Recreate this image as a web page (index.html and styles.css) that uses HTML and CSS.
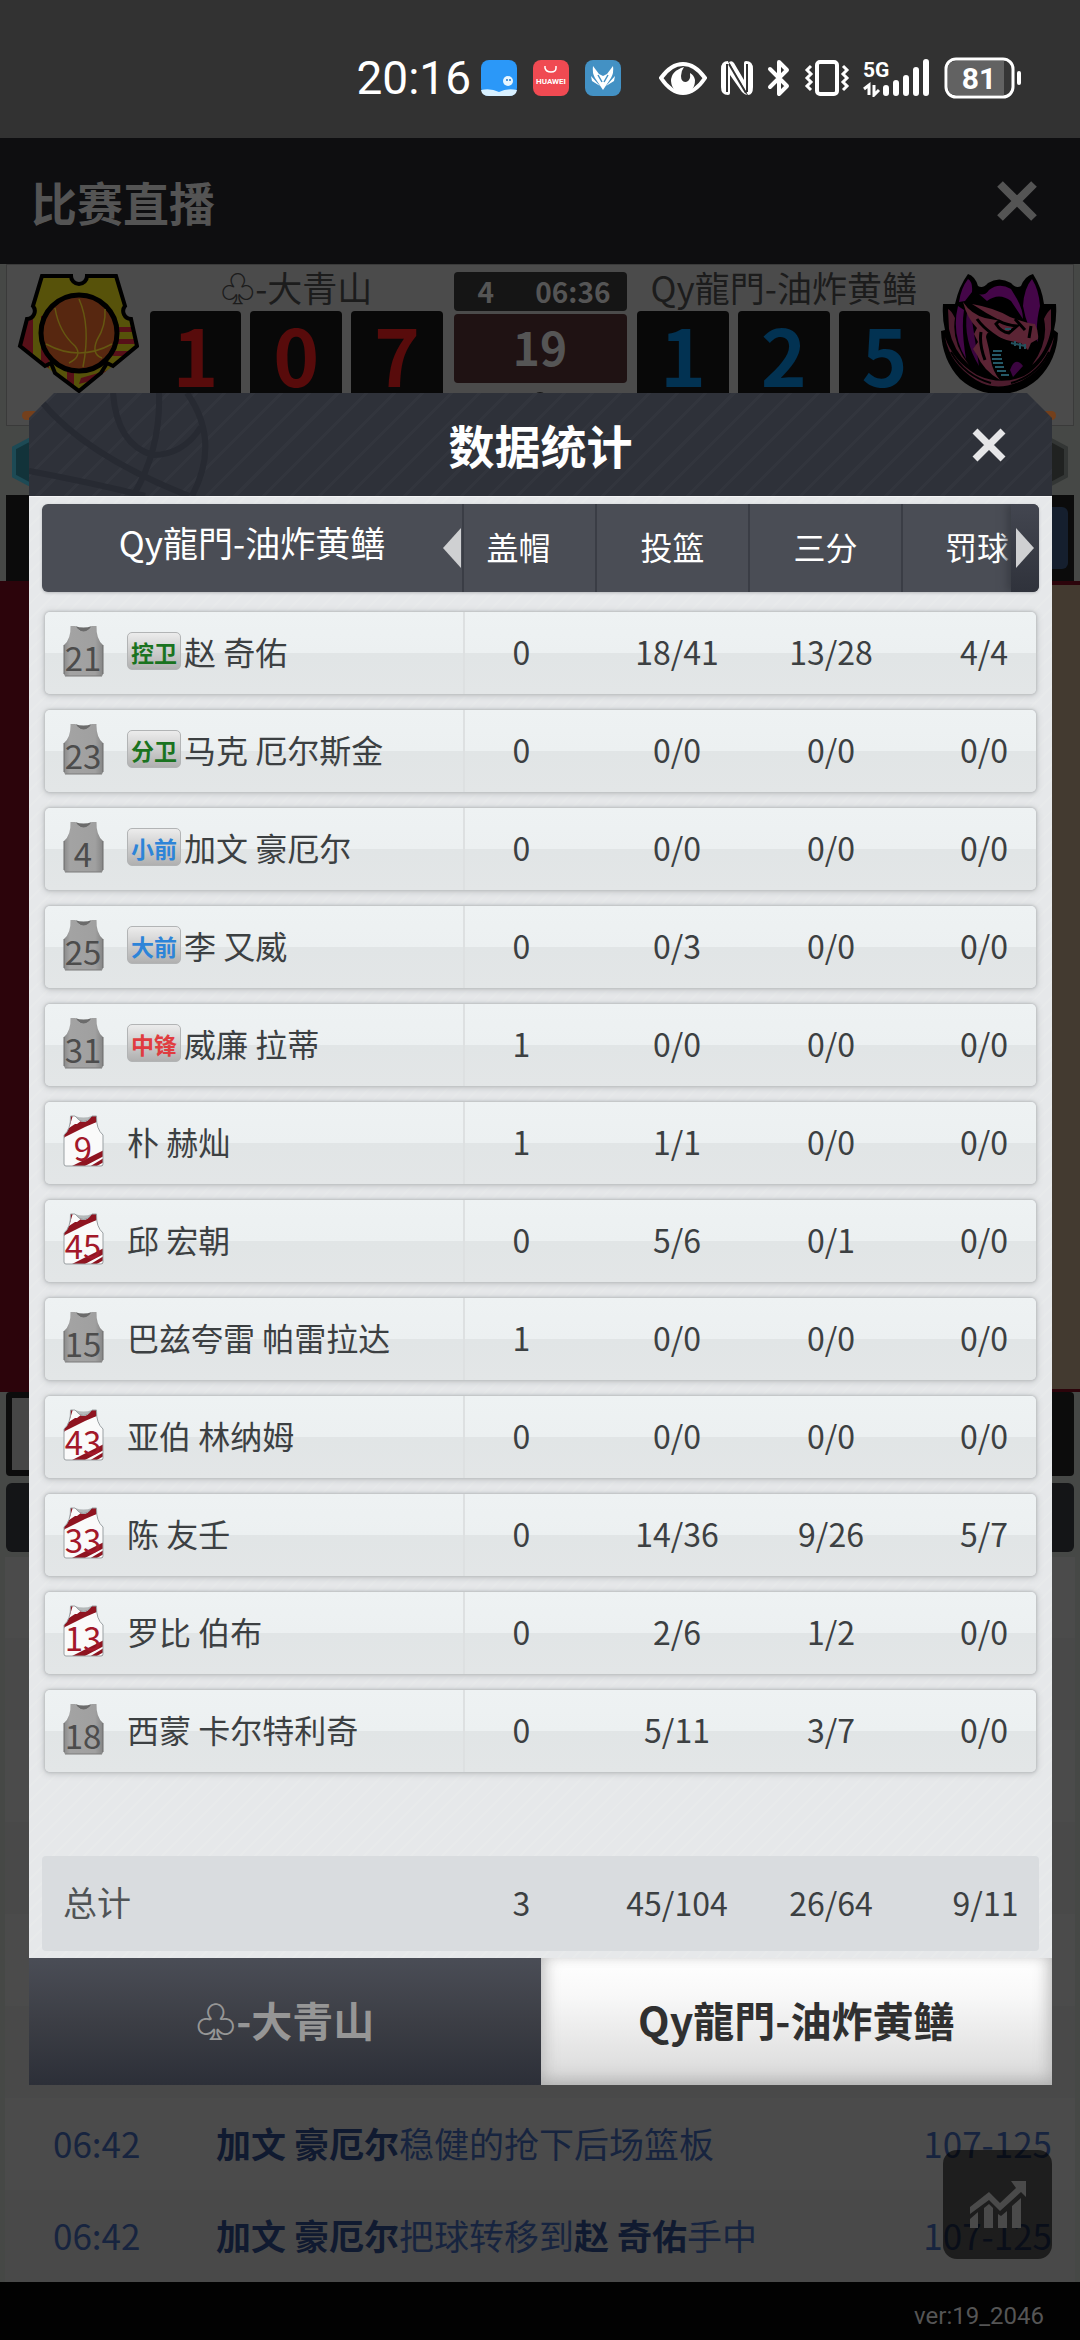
FILE: index.html
```html
<!doctype html>
<html lang="zh-CN">
    <head>
        <meta charset="UTF-8" />
        <meta name="viewport" content="width=device-width, initial-scale=1.0" />
        <title>比赛直播 - 数据统计</title>
        <link rel="stylesheet" href="styles.css">
    </head>
    <body>
        <!-- 共用图形 -->
        <svg class="defs" width="0" height="0" aria-hidden="true">
            <defs>
                <linearGradient id="greyFill" x1="0" y1="0" x2="1" y2="0">
                    <stop offset="0" stop-color="#8a8a8a" />
                    <stop offset="0.15" stop-color="#a3a3a3" />
                    <stop offset="0.8" stop-color="#a0a0a0" />
                    <stop offset="1" stop-color="#858585" />
                </linearGradient>
                <path id="shirt" d="M7.500 1H12Q20.500 12 29 1H33.500Q33 14 40 20V49Q40 51 38 51H3Q1 51 1 49V20Q8 14 7.500 1Z" />
                <clipPath id="shirtClip"><use href="#shirt" /></clipPath>
                <symbol id="jerseyGrey" viewBox="0 0 41 53">
                    <path d="M12 1Q20.500 4 29 1Q21 13 12 1Z" fill="#6b6b6b" />
                    <use href="#shirt" fill="url(#greyFill)" />
                    <path d="M1 20V49M40 20V49" stroke="#6a6a6a" stroke-width="1" />
                    <path d="M2 51H39" stroke="#7a7a7a" stroke-width="1" />
                </symbol>
                <symbol id="jerseyRed" viewBox="0 0 41 53">
                    <use href="#shirt" fill="#fafafa" />
                    <g clip-path="url(#shirtClip)" fill="#8f1420">
                        <path d="M0 24V17L12 9L24 9L36 2V6L22 12L2 22Z" />
                        <path d="M6 0H10L7 10ZM24 0H36V6L20 11L8 17L10 12L18 6Z" />
                        <path d="M7 52L41 35V41L20 52ZM26 52L41 43V47L32 52ZM37 52L41 49V52Z" />
                    </g>
                    <path d="M12 1Q20.500 4 29 1Q21 13 12 1Z" fill="#b5b9ba" />
                    <use href="#shirt" fill="none" stroke="#9aa0a3" stroke-width="1" />
                </symbol>
            </defs>
        </svg>

        <!-- 状态栏 -->
        <div class="status-bar">
            <span class="clock">20:16</span>
            <div class="app-icons">
                <svg width="36" height="36" viewBox="0 0 36 36">
                    <rect width="36" height="36" rx="8" fill="#2b98f8" />
                    <path d="M0 30Q10 28 18 32Q26 28 36 30Q35 36 28 36H8Q1 36 0 30Z" fill="#d9f0ff" />
                    <circle cx="27" cy="21" r="5" fill="#e8f6ff" />
                    <circle cx="26" cy="20" r="1" fill="#2477c8" />
                    <circle cx="29" cy="20" r="1" fill="#2477c8" />
                </svg>
                <svg width="36" height="36" viewBox="0 0 36 36">
                    <rect width="36" height="36" rx="8" fill="#f04a52" />
                    <path d="M12 6V8Q13 12 18 12Q23 12 23 8V6" fill="none" stroke="#fff" stroke-width="1.500" />
                    <text x="18" y="24" class="huawei">HUAWEI</text>
                </svg>
                <svg width="36" height="36" viewBox="0 0 36 36">
                    <rect width="36" height="36" rx="8" fill="#4391c4" />
                    <path d="M8 6L14 14L18 16L22 14L28 6Q29 13 26 18L18 30L10 18Q7 13 8 6Z" fill="#fff" />
                    <path d="M6 16L15 26L7 21ZM30 16L21 26L29 21Z" fill="#fff" />
                    <path d="M13 15L17 22M23 15L19 22" stroke="#4391c4" stroke-width="1.500" />
                </svg>
            </div>
            <div class="system-icons">
                <svg width="48" height="36" viewBox="0 0 48 36">
                    <path d="M2 18Q12 4 24 4Q36 4 46 18Q36 33 24 33Q12 33 2 18Z" fill="none" stroke="#fff" stroke-width="4" />
                    <path d="M25 7Q12 11 12 21Q13 33 25 33Q36 32 36 20Q35 15 31 13Q32 21 27 22Q22 22 22 16Q22 11 25 7Z" fill="#fff" />
                </svg>
                <svg width="34" height="36" viewBox="0 0 34 36">
                    <path d="M8 1Q1 1 1 9V27Q1 35 8 35Q10 35 10 33V15L22 32Q25 35 27 35L10 5Q8 2 8 1Z" fill="#fff" />
                    <path d="M26 1Q33 1 33 9V27Q33 35 28 35L12 8L9 2Q12 0 14 3L24 20V3Q24 1 26 1Z" fill="#fff" />
                    <path d="M7 4V32M27 4V32" stroke="#323232" stroke-width="2" />
                    <path d="M9 4L26 33" stroke="#323232" stroke-width="2" />
                </svg>
                <svg width="24" height="38" viewBox="0 0 24 38">
                    <path d="M3 10L20 27L12 35V3L20 11L3 28" fill="none" stroke="#fff" stroke-width="4" stroke-linejoin="round" stroke-linecap="round" />
                </svg>
                <svg width="46" height="38" viewBox="0 0 46 38">
                    <rect x="13" y="3" width="20" height="32" rx="3" fill="none" stroke="#fff" stroke-width="4" />
                    <path d="M7 7L3 11L7 15L3 19L7 23L3 27L7 31M39 7L43 11L39 15L43 19L39 23L43 27L39 31" fill="none" stroke="#fff" stroke-width="3" />
                </svg>
                <svg width="68" height="38" viewBox="0 0 68 38">
                    <text x="0" y="18" class="net">5G</text>
                    <path d="M6 36V26L1 30M11 26V36L16 31" fill="none" stroke="#fff" stroke-width="3" />
                    <path d="M23 29V34M33 24V34M43 19V34M53 11V34M63 3V34" stroke="#fff" stroke-width="6" stroke-linecap="round" />
                </svg>
                <svg width="80" height="42" viewBox="0 0 80 42">
                    <rect x="2" y="2" width="67" height="38" rx="10" fill="#363636" stroke="#fff" stroke-width="3" />
                    <path d="M12 4H60V38H12Q4 38 4 30V12Q4 4 12 4Z" fill="#626262" />
                    <path d="M75 16V26" stroke="#fff" stroke-width="4" stroke-linecap="round" />
                    <text x="35" y="32" class="battery">81</text>
                </svg>
            </div>
        </div>

        <header class="page-header">
            <h1>比赛直播</h1>
            <button type="button" class="close-btn" aria-label="关闭直播">
                <svg width="42" height="42" viewBox="0 0 42 42"><path d="M4 4L38 38M38 4L4 38" stroke="currentColor" stroke-width="8" /></svg>
            </button>
        </header>

        <main class="live">
            <!-- 比分牌 -->
            <section class="scoreboard">
                <svg class="logo" width="124" height="120" viewBox="-2 0 124 120">
                    <clipPath id="shieldClip"><path d="M25 2H54A8 8 0 0 0 70 2H99L108 32A8 8 0 0 0 114 45L120 72L96 92L62 117L28 92L3 72L10 45A8 8 0 0 0 16 32Z" /></clipPath>
                    <g clip-path="url(#shieldClip)">
                        <rect width="124" height="120" fill="#57520a" />
                        <path d="M12 42H16V82L30 94H18L4 72ZM24 42V92L32 94V42ZM96 53H122V58H96ZM96 65H122V70H96ZM96 77H122V82H96ZM50 95V112H57V95ZM64 104L92 96V102L62 110Z" fill="#571018" />
                    </g>
                    <path d="M25 2H54A8 8 0 0 0 70 2H99L108 32A8 8 0 0 0 114 45L120 72L96 92L90 89L84 99L62 117L38 99L34 89L28 92L3 72L10 45A8 8 0 0 0 16 32Z" fill="none" stroke="#000" stroke-width="4" />
                    <circle cx="62" cy="59" r="38" fill="#572710" stroke="#000" stroke-width="5" />
                    <path d="M62 25Q74 52 66 93M38 34Q42 58 58 72Q66 82 52 89M88 35Q89 52 80 66Q74 80 85 84M29 70Q62 88 95 70" fill="none" stroke="#655711" stroke-width="1.500" />
                </svg>
                <div class="team team-home">
                    <div class="team-name">♧-大青山</div>
                    <div class="digits"><span>1</span><span>0</span><span>7</span></div>
                </div>
                <div class="clock-box">
                    <div class="period"><span>4</span><span>06:36</span></div>
                    <div class="shot-clock">19</div>
                    <div class="possession"></div>
                </div>
                <div class="team team-away">
                    <div class="team-name">Qy龍門-油炸黄鳝</div>
                    <div class="digits"><span>1</span><span>2</span><span>5</span></div>
                </div>
                <svg class="logo" width="124" height="126" viewBox="0 0 124 126">
                    <path d="M27 0Q34 2 37 12Q42 15 47 9Q58 2 70 9Q75 15 80 12Q84 2 92 0Q101 14 103 30L115 30Q116 44 113 56L117 59Q116 86 97 105Q80 120 58 120Q36 120 19 105Q1 86 0 57L4 56Q1 44 2 30L14 30Q18 12 27 0Z" fill="#000" />
                    <path d="M27 5Q32 8 31 18L24 27L18 28Q20 14 27 5ZM91 5Q98 16 99 32Q94 52 97 68Q86 55 82 32Q83 14 91 5ZM48 16Q58 8 70 15L76 25Q82 36 82 45L70 27Q58 18 46 27L38 20Q44 22 48 16ZM17 32Q10 60 25 85Q20 55 23 36Z" fill="#440648" />
                    <path d="M26 38Q22 66 38 92Q34 66 31 46Z" fill="#3b0540" />
                    <path d="M7 35Q10 36 14 44Q10 68 28 91Q12 76 8 55ZM110 35Q106 38 103 45Q108 68 91 91Q106 78 110 55ZM4 63Q9 90 35 106Q56 119 82 106Q108 92 113 63Q103 91 83 102Q60 112 36 101Q12 87 4 63Z" fill="#4c1c2d" />
                    <path d="M10 78Q24 102 50 109M108 78Q96 102 70 109" fill="none" stroke="#000" stroke-width="2" />
                    <path d="M22 28Q30 40 44 44L60 47Q46 40 31 30Q54 34 69 43Q85 49 94 50Q98 58 97 65L90 69L87 76L80 69Q65 67 53 61Q46 55 45 63Q48 74 50 87Q52 98 59 106Q42 96 36 81L32 75L37 68L33 60L36 54Q26 44 22 28Z" fill="#5b2434" />
                    <path d="M36 45Q48 62 82 77M58 47Q65 51 76 52L68 59Q60 58 55 50ZM74 45L84 56M90 52L88 64M40 58Q38 70 44 86" fill="none" stroke="#000" stroke-width="3" />
                    <path d="M70 69L84 72M74 67V72M79 69V75M84 70V75M64 55H70" stroke="#24515e" stroke-width="2" />
                    <path d="M52 77H61M51 81H60M51 85H61M52 89H62M54 93H63M56 97H65M60 101H68" stroke="#245866" stroke-width="2" />
                    <path d="M69 96Q74 82 82 92L72 103Z" fill="#3b0540" />
                </svg>
            </section>

            <section class="events-strip">
                <svg width="34" height="48" viewBox="0 0 34 48"><path d="M17 2L32 10V38L17 46L2 38V10Z" fill="#12333a" stroke="#1d4a55" stroke-width="4" /></svg>
                <svg width="34" height="48" viewBox="0 0 34 48"><path d="M17 2L32 10V38L17 46L2 38V10Z" fill="#202221" stroke="#333635" stroke-width="4" /></svg>
            </section>

            <div class="control-strip"><span class="control-btn"></span></div>
            <div class="court"></div>
            <div class="court-controls"></div>
            <div class="log-title"></div>

            <!-- 文字直播 -->
            <section class="log">
                <ul>
                    <li></li>
                    <li></li>
                    <li></li>
                    <li></li>
                    <li></li>
                    <li></li>
                    <li><time>06:42</time><p><b>加文 豪厄尔</b>稳健的抢下后场篮板</p><span>107-125</span></li>
                    <li><time>06:42</time><p><b>加文 豪厄尔</b>把球转移到<b>赵 奇佑</b>手中</p><span>107-125</span></li>
                </ul>
                <button type="button" class="chart-btn" aria-label="数据统计">
                    <svg width="58" height="50" viewBox="0 0 58 50">
                        <path d="M1 27L20 12L31 23L47 8L42 1H57V17L52 12L31 31L20 20L1 34Z" fill="currentColor" />
                        <path d="M1 39L9 32V48H1ZM15 28L20 24L24 28V48H15ZM29 34L32 36L38 31V48H29ZM43 26L52 18V48H43Z" fill="currentColor" />
                    </svg>
                </button>
            </section>
        </main>

        <footer class="version">ver:19_2046</footer>

        <!-- 数据统计弹窗 -->
        <div class="overlay">
            <div class="modal" role="dialog" aria-labelledby="modalTitle">
                <div class="modal-header">
                    <svg class="ball" width="190" height="103" viewBox="0 0 190 103">
                        <path d="M158 0Q192 48 163 103M12 8Q56 62 160 103M84 0Q88 52 124 62Q154 62 172 34M130 0Q132 56 104 103M0 78Q64 90 116 103" fill="none" stroke="#272a32" stroke-width="6" />
                    </svg>
                    <h2 id="modalTitle">数据统计</h2>
                    <button type="button" class="close-btn" aria-label="关闭">
                        <svg width="34" height="34" viewBox="0 0 34 34"><path d="M3 3L31 31M31 3L3 31" stroke="currentColor" stroke-width="7" /></svg>
                    </button>
                </div>

                <div class="modal-body">
                    <table class="stats">
                        <thead>
                            <tr>
                                <th scope="col" class="team-col">
                                    <span>Qy龍門-油炸黄鳝</span>
                                    <button type="button" class="arrow arrow-left" aria-label="向左"></button>
                                </th>
                                <th scope="col">盖帽</th>
                                <th scope="col">投篮</th>
                                <th scope="col">三分</th>
                                <th scope="col">罚球<button type="button" class="arrow arrow-right" aria-label="向右"></button></th>
                            </tr>
                        </thead>
                        <tbody>
                            <tr>
                                <td class="player"><svg class="jersey grey" viewBox="0 0 41 53"><use href="#jerseyGrey" /><text x="20" y="46">21</text></svg><span class="pos guard">控卫</span>赵 奇佑</td>
                                <td>0</td><td>18/41</td><td>13/28</td><td>4/4</td>
                            </tr>
                            <tr>
                                <td class="player"><svg class="jersey grey" viewBox="0 0 41 53"><use href="#jerseyGrey" /><text x="20" y="46">23</text></svg><span class="pos guard">分卫</span>马克 厄尔斯金</td>
                                <td>0</td><td>0/0</td><td>0/0</td><td>0/0</td>
                            </tr>
                            <tr>
                                <td class="player"><svg class="jersey grey" viewBox="0 0 41 53"><use href="#jerseyGrey" /><text x="20" y="46">4</text></svg><span class="pos forward">小前</span>加文 豪厄尔</td>
                                <td>0</td><td>0/0</td><td>0/0</td><td>0/0</td>
                            </tr>
                            <tr>
                                <td class="player"><svg class="jersey grey" viewBox="0 0 41 53"><use href="#jerseyGrey" /><text x="20" y="46">25</text></svg><span class="pos forward">大前</span>李 又威</td>
                                <td>0</td><td>0/3</td><td>0/0</td><td>0/0</td>
                            </tr>
                            <tr>
                                <td class="player"><svg class="jersey grey" viewBox="0 0 41 53"><use href="#jerseyGrey" /><text x="20" y="46">31</text></svg><span class="pos center">中锋</span>威廉 拉蒂</td>
                                <td>1</td><td>0/0</td><td>0/0</td><td>0/0</td>
                            </tr>
                            <tr>
                                <td class="player"><svg class="jersey red" viewBox="0 0 41 53"><use href="#jerseyRed" /><text x="20" y="46">9</text></svg>朴 赫灿</td>
                                <td>1</td><td>1/1</td><td>0/0</td><td>0/0</td>
                            </tr>
                            <tr>
                                <td class="player"><svg class="jersey red" viewBox="0 0 41 53"><use href="#jerseyRed" /><text x="20" y="46">45</text></svg>邱 宏朝</td>
                                <td>0</td><td>5/6</td><td>0/1</td><td>0/0</td>
                            </tr>
                            <tr>
                                <td class="player"><svg class="jersey grey" viewBox="0 0 41 53"><use href="#jerseyGrey" /><text x="20" y="46">15</text></svg>巴兹夸雷 帕雷拉达</td>
                                <td>1</td><td>0/0</td><td>0/0</td><td>0/0</td>
                            </tr>
                            <tr>
                                <td class="player"><svg class="jersey red" viewBox="0 0 41 53"><use href="#jerseyRed" /><text x="20" y="46">43</text></svg>亚伯 林纳姆</td>
                                <td>0</td><td>0/0</td><td>0/0</td><td>0/0</td>
                            </tr>
                            <tr>
                                <td class="player"><svg class="jersey red" viewBox="0 0 41 53"><use href="#jerseyRed" /><text x="20" y="46">33</text></svg>陈 友壬</td>
                                <td>0</td><td>14/36</td><td>9/26</td><td>5/7</td>
                            </tr>
                            <tr>
                                <td class="player"><svg class="jersey red" viewBox="0 0 41 53"><use href="#jerseyRed" /><text x="20" y="46">13</text></svg>罗比 伯布</td>
                                <td>0</td><td>2/6</td><td>1/2</td><td>0/0</td>
                            </tr>
                            <tr>
                                <td class="player"><svg class="jersey grey" viewBox="0 0 41 53"><use href="#jerseyGrey" /><text x="20" y="46">18</text></svg>西蒙 卡尔特利奇</td>
                                <td>0</td><td>5/11</td><td>3/7</td><td>0/0</td>
                            </tr>
                        </tbody>
                        <tfoot>
                            <tr>
                                <th scope="row">总计</th>
                                <td>3</td><td>45/104</td><td>26/64</td><td>9/11</td>
                            </tr>
                        </tfoot>
                    </table>
                </div>

                <div class="tabs">
                    <button type="button" class="tab">♧-大青山</button>
                    <button type="button" class="tab active">Qy龍門-油炸黄鳝</button>
                </div>
            </div>
        </div>
    </body>
</html>
```
FILE: styles.css
```css
* {
    box-sizing: border-box;
}
body {
    position: relative;
    margin: 0;
    min-height: 100vh;
    background-color: #020202;
    font-family: "Noto Sans CJK SC", "DejaVu Sans", sans-serif;
}
h1,
h2,
p,
ul {
    margin: 0;
    padding: 0;
}
ul {
    list-style: none;
}
button {
    border: none;
    background: none;
    padding: 0;
    font-family: inherit;
    cursor: pointer;
}
svg {
    display: block;
    flex-shrink: 0;
}
.defs {
    position: absolute;
}

/* 状态栏 */
.status-bar {
    display: flex;
    align-items: center;
    justify-content: flex-end;
    height: 138px;
    padding: 18px 56px 0 0;
    background-color: #323232;
    color: #fff;
}
.clock {
    font-family: Roboto, sans-serif;
    font-size: 46px;
    line-height: 52px;
    margin-right: 10px;
}
.app-icons {
    display: flex;
    gap: 16px;
    margin-right: 38px;
}
.system-icons {
    display: flex;
    align-items: center;
    gap: 13px;
}
.huawei {
    font: bold 8px Roboto, sans-serif;
    fill: #fff;
    text-anchor: middle;
}
.net {
    font: bold 21px Roboto, sans-serif;
    fill: #fff;
}
.battery {
    font: bold 30px Roboto, sans-serif;
    fill: #fff;
    text-anchor: middle;
}

/* 页头 */
.page-header {
    display: flex;
    align-items: center;
    justify-content: space-between;
    height: 126px;
    padding: 0 42px 0 31px;
    background-color: #0e0e10;
    color: #545454;
}
.page-header h1 {
    font-size: 46px;
    line-height: 60px;
}
.close-btn {
    color: inherit;
}

.live {
    background-color: #464846;
}

/* 比分牌 */
.scoreboard {
    position: relative;
    display: flex;
    justify-content: space-between;
    align-items: flex-start;
    height: 162px;
    margin: 0 6px;
    padding: 7px 8px 0;
    background-color: #4b4b4b;
    border: 1px solid #3a3a3a;
    overflow: hidden;
}
.scoreboard::before,
.scoreboard::after {
    content: "";
    position: absolute;
    bottom: 5px;
    width: 16px;
    height: 9px;
    border-radius: 5px;
    background-color: #74401c;
}
.scoreboard::before {
    left: 15px;
}
.scoreboard::after {
    right: 17px;
}
.logo {
    margin-top: 2px;
}
.team {
    width: 293px;
}
.team-name {
    height: 39px;
    font-size: 35px;
    line-height: 29px;
    color: #1c1c1c;
    text-align: center;
    white-space: nowrap;
}
.digits {
    display: flex;
    gap: 9px;
}
.digits span {
    flex: 1;
    height: 100px;
    border-radius: 4px;
    background-color: #080808;
    font-size: 78px;
    line-height: 84px;
    font-weight: bold;
    text-align: center;
}
.team-home .digits {
    color: #580b0b;
}
.team-away .digits {
    color: #023252;
}
.clock-box {
    width: 173px;
    color: #555;
    font-weight: bold;
}
.period {
    display: flex;
    justify-content: space-between;
    height: 39px;
    padding: 0 16px 0 24px;
    border-radius: 4px;
    background-color: #151515;
    font-size: 28px;
    line-height: 38px;
}
.shot-clock {
    height: 69px;
    margin-top: 3px;
    border-radius: 4px;
    background-color: #1f1213;
    font-size: 46px;
    line-height: 64px;
    text-align: center;
}
.possession {
    width: 14px;
    height: 8px;
    margin: 9px auto 0;
    border-radius: 8px 8px 0 0;
    background-color: #151515;
}

/* 比赛区域 */
.events-strip {
    display: flex;
    justify-content: space-between;
    height: 69px;
    padding: 12px;
}
.control-strip {
    display: flex;
    justify-content: flex-end;
    height: 86px;
    margin: 0 6px;
    padding: 12px 6px;
    background-color: #0b0b0b;
}
.control-btn {
    width: 100px;
    border-radius: 6px;
    background-color: #151f2e;
}
.court {
    height: 811px;
    border-top: 4px solid #2c040b;
    border-bottom: 3px solid #2c040b;
    background: linear-gradient(90deg, #2c040b 50%, #433a30 50%);
}
.court-controls {
    height: 84px;
    margin: 0 6px 7px;
    border: 6px solid #0c0c0c;
    border-radius: 4px;
    background: linear-gradient(90deg, #464646 50%, #0c0c0c 50%);
}
.log-title {
    height: 69px;
    margin: 0 6px;
    border-radius: 6px;
    background-color: #141517;
}

/* 文字直播 */
.log {
    position: relative;
    margin: 0 5px;
    padding-top: 5px;
}
.log li {
    display: flex;
    align-items: center;
    height: 92px;
    padding: 0 23px 2px 48px;
    background-color: #4b4b4b;
    color: #17243f;
    font-size: 35px;
    line-height: 50px;
}
.log li:nth-child(even) {
    background-color: #494949;
}
.log li:first-child {
    height: 81px;
}
.log time {
    width: 163px;
}
.log p {
    flex: 1;
}
.log b {
    color: #101a30;
}
.chart-btn {
    position: absolute;
    right: 23px;
    bottom: 23px;
    display: flex;
    align-items: center;
    justify-content: center;
    width: 109px;
    height: 109px;
    border-radius: 14px;
    background-color: rgba(0, 0, 0, 0.6);
    color: #4a4a4a;
}

.version {
    padding: 18px 36px 8px;
    color: #555;
    font-family: Roboto, sans-serif;
    font-size: 24px;
    line-height: 32px;
    text-align: right;
}

/* 弹窗 */
.overlay {
    position: absolute;
    inset: 0;
    padding: 393px 28px 0 29px;
}
.modal-header {
    position: relative;
    display: flex;
    align-items: center;
    justify-content: center;
    height: 103px;
    color: #fff;
    background: repeating-linear-gradient(135deg, #2e3139 0 17px, #32353d 17px 20px);
    clip-path: polygon(25px 0, calc(100% - 25px) 0, 100% 25px, 100% 100%, 0 100%, 0 25px);
}
.modal-header h2 {
    padding-bottom: 2px;
    font-size: 46px;
    line-height: 60px;
}
.modal-header .ball {
    position: absolute;
    left: 0;
    top: 0;
}
.modal-header .close-btn {
    position: absolute;
    right: 46px;
    color: #e6e6e8;
}
.modal-body {
    padding: 7px 13px 7px;
    background: repeating-linear-gradient(135deg, #e6e8ea 0 9px, #e8eaeb 9px 11px);
    border-top: 1px solid #f4f5f6;
}

/* 统计表 */
.stats {
    display: block;
    font-size: 32px;
    line-height: 44px;
    color: #3c4042;
}
.stats thead,
.stats tfoot {
    display: block;
}
.stats tr {
    display: grid;
    grid-template-columns: 420fr 135fr 154fr 154fr 128fr;
}
.stats th,
.stats td {
    display: flex;
    align-items: center;
    justify-content: center;
    padding: 0 0 4px;
    font-weight: normal;
}
.stats td:nth-child(2) {
    padding-right: 22px;
}
.stats td:last-child {
    padding-left: 24px;
}
.stats thead tr {
    grid-template-columns: 420fr 133fr 153fr 153fr 138fr;
    height: 88px;
    border-radius: 6px;
    background-color: #4a4d55;
    box-shadow: 0 1px 3px #b6b8bb;
    color: #fff;
    overflow: hidden;
}
.stats thead th {
    position: relative;
    border-left: 2px solid #3a3d45;
}
.stats thead th.team-col {
    border-left: none;
    padding-bottom: 12px;
    font-size: 35px;
}
.stats thead th:nth-child(2) {
    padding-right: 22px;
}
.stats thead th:last-child {
    padding-left: 12px;
}
.arrow {
    position: absolute;
    top: 0;
    right: 0;
    width: 28px;
    height: 88px;
}
.arrow::before {
    content: "";
    display: block;
    width: 18px;
    height: 40px;
    margin: 0 auto;
    background-color: #cfd0d2;
}
.arrow-left {
    width: 20px;
}
.arrow-left::before {
    clip-path: polygon(100% 0, 100% 100%, 0 50%);
}
.arrow-right {
    background: linear-gradient(#434650, #2f323b);
    box-shadow: -4px 0 8px #3a3d45;
}
.arrow-right::before {
    clip-path: polygon(0 0, 100% 50%, 0 100%);
}
.stats tbody {
    display: flex;
    flex-direction: column;
    gap: 16px;
    padding: 20px 3px 84px;
}
.stats tbody tr {
    height: 82px;
    border-radius: 5px;
    background: linear-gradient(#eef2f3, #ecf0f1 50%, #e1e5e6 50%, #e3e6e7);
    box-shadow: 0 0 2px 1px #bfc2c4, 0 1px 6px 1px #c2c5c7;
}
.stats .player {
    justify-content: flex-start;
    padding-left: 18px;
    border-right: 2px solid #dde0e1;
    white-space: pre;
}
.jersey {
    width: 41px;
    height: 53px;
    margin-right: 23px;
    overflow: visible;
}
.jersey text {
    font-size: 33px;
    text-anchor: middle;
}
.jersey.grey text {
    fill: #4c4c4c;
}
.jersey.red text {
    fill: #a3182a;
}
.pos {
    width: 54px;
    height: 38px;
    margin-right: 3px;
    border: 1px solid #b2b4b5;
    border-radius: 5px;
    background: linear-gradient(#ececec, #b0b0b0);
    font-size: 23px;
    line-height: 38px;
    font-weight: bold;
    text-align: center;
}
.guard {
    color: #1a7320;
}
.forward {
    color: #2d84d8;
}
.center {
    color: #e03c40;
}
.stats tfoot tr {
    grid-template-columns: 423fr 135fr 154fr 154fr 131fr;
    height: 95px;
    border-radius: 4px;
    background-color: #d9dcdf;
}
.stats tfoot th {
    justify-content: flex-start;
    padding-left: 21px;
    font-size: 34px;
    color: #505456;
}

/* 球队切换 */
.tabs {
    display: flex;
}
.tab {
    flex: 1;
    height: 127px;
    padding-bottom: 6px;
    background: linear-gradient(#4a4d56, #3c3e45 50%, #2c2f38);
    color: #969696;
    font-size: 41px;
    font-weight: bold;
}
.tab.active {
    background: linear-gradient(#fff, #f8f8f8 30%, #d8d8d8);
    box-shadow: inset 0 -8px 18px -6px #a8a8a8, inset 10px 0 18px -8px #c4c4c4, inset -10px 0 18px -8px #c4c4c4;
    color: #303030;
}
```
